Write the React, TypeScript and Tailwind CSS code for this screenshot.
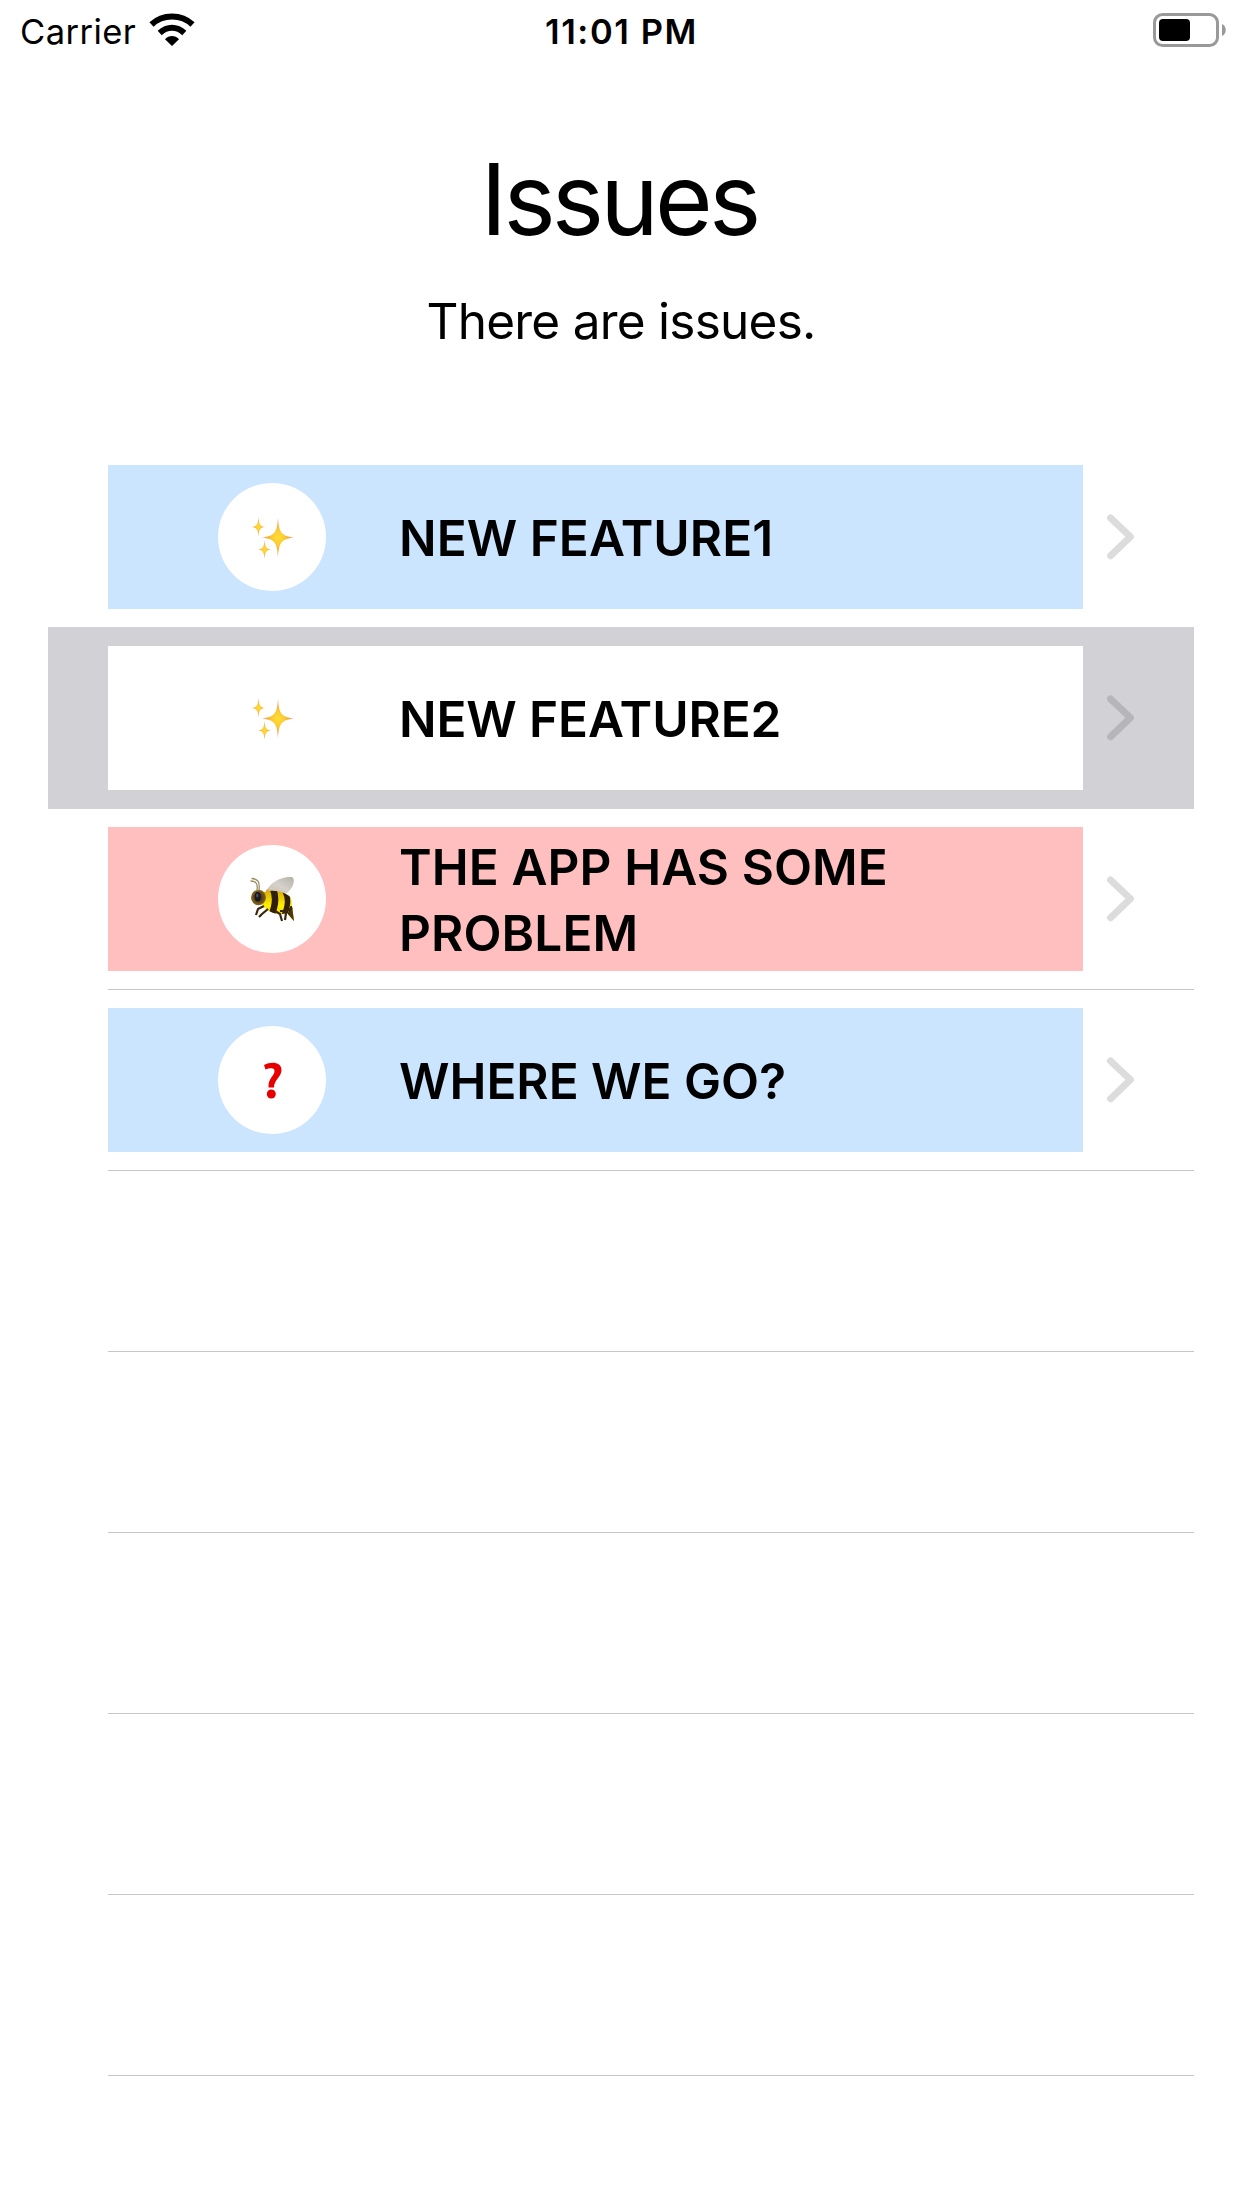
import type { ReactNode } from "react";

function Sparkles() {
  return (
    <svg viewBox="0 0 108 108" className="size-full">
      <defs>
        <radialGradient id="star">
          <stop offset="0" stopColor="#ffdf35" />
          <stop offset="0.4" stopColor="#fbc933" />
          <stop offset="1" stopColor="#f08a5c" />
        </radialGradient>
      </defs>
      <g fill="url(#star)">
        <path d="M60 35C61 49 63 53 76 54.500C63 56 61 60 60 74C59 60 57 56 44 54.500C57 53 59 49 60 35Z" />
        <path d="M40.500 34C41 41 42 43.300 47 44C42 44.700 41 47 40.500 53.500C40 47 39 44.700 34 44C39 43.300 40 41 40.500 34Z" />
        <path d="M46.500 57C47 63.500 48 65.800 53 66.500C48 67.200 47 69.500 46.500 76C46 69.500 45 67.200 40 66.500C45 65.800 46 63.500 46.500 57Z" />
      </g>
    </svg>
  );
}

function Bee() {
  return (
    <svg viewBox="0 0 108 108" className="size-full" fill="none">
      <defs>
        <linearGradient id="wing" x1="0" y1="1" x2="1" y2="0">
          <stop offset="0" stopColor="#c9beb2" />
          <stop offset="0.5" stopColor="#d5d1cb" />
          <stop offset="1" stopColor="#b5b0a6" />
        </linearGradient>
        <linearGradient id="body" x1="0" y1="0" x2="0" y2="1">
          <stop offset="0" stopColor="#d7ad08" />
          <stop offset="0.5" stopColor="#fff000" />
          <stop offset="1" stopColor="#e2c004" />
        </linearGradient>
        <radialGradient id="head">
          <stop offset="0.4" stopColor="#513914" />
          <stop offset="1" stopColor="#8a6820" />
        </radialGradient>
        <clipPath id="abdomen">
          <path d="M46 47C56 44 68 47 73 53L76 76L69 68C60 71 51 68 44 60Z" />
        </clipPath>
      </defs>
      <path d="M48 47C51 38 63 31 74 32C78 34 75 44 69 48C61 51 54 48 48 47Z" fill="url(#wing)" />
      <path d="M46 47C56 44 68 47 73 53L76 76L69 68C60 71 51 68 44 60Z" fill="url(#body)" />
      <g clipPath="url(#abdomen)" stroke="#30200b">
        <path d="M55 44C59 53 57 62 53 71" strokeWidth="6.500" />
        <path d="M67 46C71 54 70 61 66 71" strokeWidth="5.500" />
        <path d="M73 61L70 70L78 79L77 66Z" fill="#4c3708" strokeWidth="1" />
      </g>
      <path d="M46 61L40 64L38 70M50 64L44 69L41 72M57 66L62 69L64 76M62 66L68 66L74 63M68 68L67 75" stroke="#3a270b" strokeWidth="2.200" strokeLinejoin="round" />
      <path d="M48 45L51 44L49 49Z" fill="#e9a21b" />
      <ellipse cx="40.500" cy="52.500" rx="7.500" ry="7.700" fill="url(#head)" />
      <ellipse cx="39.700" cy="51.800" rx="3.200" ry="4.700" fill="#151922" />
      <ellipse cx="39.300" cy="50.500" rx="1.200" ry="2" fill="#465061" />
      <path d="M39 45C40 39 38 36 33 36M41 45C42 37 40 34 34 33.500" stroke="#9a8c63" strokeWidth="1.300" strokeLinecap="round" />
    </svg>
  );
}

function Question() {
  return (
    <svg viewBox="0 0 108 108" className="size-full">
      <path d="M46 39C54 35 63.500 36.500 63.500 44C63.500 51 56 53.500 56 61.500H50.500C50 52 56.500 50 56.500 45C56.500 41.500 52 42 47.500 43.500Z" fill="#e60000" />
      <circle cx="53.300" cy="68" r="4.500" fill="#e60000" />
    </svg>
  );
}

function Chevron({ className }: { className: string }) {
  return (
    <svg viewBox="0 0 28 46" className={`ml-6 h-[46px] w-7 ${className}`} fill="none">
      <path d="M3.600 4L23.400 22.700L3.600 41.700" stroke="currentColor" strokeWidth="7" strokeLinecap="round" strokeLinejoin="round" />
    </svg>
  );
}

type Issue = { title: string; icon: ReactNode; box: string; row: string; chevron: string; text: string };

const issues: Issue[] = [
  { title: "NEW FEATURE1", icon: <Sparkles />, box: "bg-[#cbe5ff]", row: "", chevron: "text-[#dcdcdc]", text: "tracking-[0.05px]" },
  { title: "NEW FEATURE2", icon: <Sparkles />, box: "bg-white", row: "bg-[#d1d1d6] shadow-[0_-1px_0_#d1d1d6]", chevron: "text-[#b5b5ba]", text: "tracking-[-0.1px]" },
  { title: "THE APP HAS SOME PROBLEM", icon: <Bee />, box: "bg-[#ffbfbf]", row: "", chevron: "text-[#dcdcdc]", text: "tracking-[0.1px]" },
  { title: "WHERE WE GO?", icon: <Question />, box: "bg-[#cbe5ff]", row: "", chevron: "text-[#dcdcdc]", text: "tracking-[0px]" },
];

function Separator() {
  return <div className="ml-[60px] h-px bg-[#c6c6c8]" />;
}

function IssueRow({ issue, ruled }: { issue: Issue; ruled: boolean }) {
  return (
    <li className={`h-[181px] ${issue.row}`}>
      <div className="flex h-[180px] items-center pl-[60px]">
        <div className={`flex h-36 w-[975px] items-center pl-[110px] ${issue.box}`}>
          <div className="size-[108px] shrink-0 rounded-full bg-white">{issue.icon}</div>
          <p className={`ml-[73px] w-[560px] pt-0.5 text-[49.5px] leading-[66px] font-semibold ${issue.text}`}>{issue.title}</p>
        </div>
        <Chevron className={issue.chevron} />
      </div>
      {ruled && <Separator />}
    </li>
  );
}

function StatusBar() {
  return (
    <header className="grid h-[60px] grid-cols-3 px-5 text-[34.5px] leading-[63px]">
      <div className="flex">
        <span className="w-[116px] tracking-[0.45px]">Carrier</span>
        <svg viewBox="0 0 46 34" className="mt-[13px] ml-[13px] h-[34px] w-[46px]" fill="none">
          <path d="M2.500 11.500C13.500 .8 32.500 .8 43.500 11.500" stroke="black" strokeWidth="6" />
          <path d="M10.700 20C18 13 28 13 35.300 20" stroke="black" strokeWidth="6" />
          <path d="M16 26.200C20 22 26 22 30 26.200L23 33Z" fill="black" />
        </svg>
      </div>
      <div className="pl-px text-center font-semibold tracking-[1.6px]">11:01 PM</div>
      <div className="flex justify-end">
        <svg viewBox="0 0 74 34" className="mt-[13px] -mr-[5px] h-[34px] w-[74px]">
          <rect x="1.500" y="1.500" width="63" height="31" rx="8" fill="none" stroke="#999" strokeWidth="3" />
          <rect x="6" y="6" width="31" height="22" rx="4" fill="black" />
          <path d="M69 11C74 13 74 21 69 23Z" fill="#999" />
        </svg>
      </div>
    </header>
  );
}

export default function App() {
  return (
    <main className="h-[2208px] w-[1242px] overflow-hidden bg-white font-['Inter',sans-serif] text-black">
      <StatusBar />
      <div className="flex h-[387px] flex-col items-center">
        <h1 className="mt-[79px] pr-1 text-[99px] leading-[120px] font-[430] tracking-[-3.8px]">Issues</h1>
        <p className="mt-[29px] text-[49.5px] leading-[66px] font-[430] tracking-[-0.75px]">There are issues.</p>
      </div>
      <ul className="ml-12 w-[1146px]">
        {issues.map((issue, i) => (
          <IssueRow key={issue.title} issue={issue} ruled={i > 1} />
        ))}
        {[0, 1, 2, 3, 4].map((i) => (
          <li key={i} className="h-[181px] pt-[180px]"><Separator /></li>
        ))}
      </ul>
    </main>
  );
}
